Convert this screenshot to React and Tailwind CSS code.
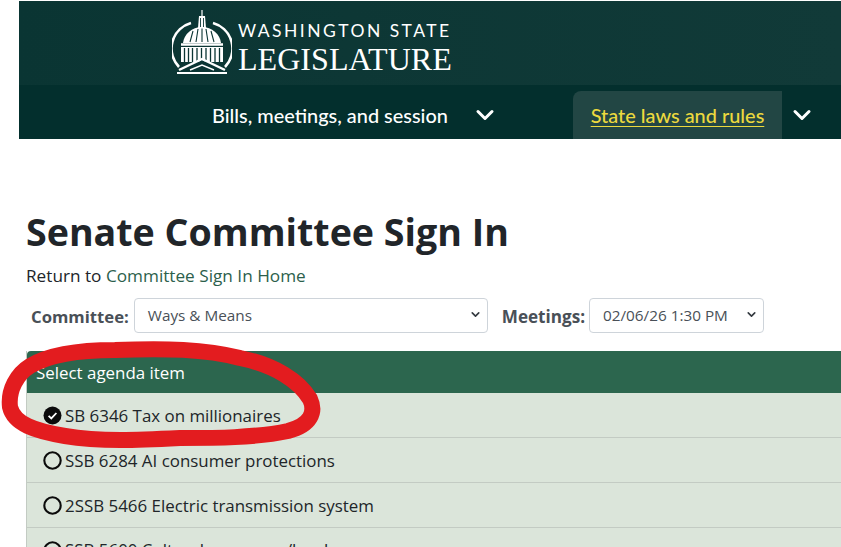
import { ChevronDown } from "lucide-react";

function Logo() {
  return (
    <svg width="60" height="66" viewBox="0 0 60 66" fill="none" className="shrink-0">
      {/* ring */}
      <path d="M19 13 A26.5 26.5 0 0 0 7 57" stroke="#fff" strokeWidth="2.6" />
      <path d="M41 13 A26.5 26.5 0 0 1 53 57" stroke="#fff" strokeWidth="2.6" />
      {/* lantern */}
      <path d="M30 0 L30 6" stroke="#fff" strokeWidth="1.2" />
      <path d="M27 6 L33 6 L34 18 L26 18 Z" fill="#fff" />
      <path d="M28.5 8 V17 M31.5 8 V17" stroke="#0b3534" strokeWidth="0.9" />
      {/* dome */}
      <path d="M11 33 C12 24 20 17 30 17 C40 17 48 24 49 33 Z" fill="#fff" />
      <path d="M18 32 L21 21 M24 32 L26 19 M30 32 V18.5 M36 32 L34 19 M42 32 L39 21" stroke="#0b3534" strokeWidth="1.1" />
      <path d="M9 34.5 H51" stroke="#fff" strokeWidth="2.4" />
      {/* columns */}
      <path d="M9 37 H51 V52 H9 Z" fill="#fff" />
      <path d="M12.5 38 V52 M16.5 38 V52 M20.5 38 V52 M25 38 V52 M29.5 38 V52 M34 38 V52 M38.5 38 V52 M43 38 V52 M47.5 38 V52" stroke="#0b3534" strokeWidth="1.3" />
      {/* pediment */}
      <path d="M6 62 L30 50 L54 62 Z" fill="#0b3534" />
      <path d="M7 60 L30 49 L53 60" stroke="#fff" strokeWidth="2.4" />
      <path d="M18 60 L30 55 L42 60" stroke="#fff" strokeWidth="1.4" />
      <path d="M5 63 H55" stroke="#fff" strokeWidth="2" />
    </svg>
  );
}

function Row({ label, checked }) {
  return (
    <div className="h-[44.9px] flex items-center pl-[16px] pt-[1px] border-b border-[#c3cbc3] bg-[#dbe5da] text-[16.9px] text-[#212529] whitespace-nowrap shrink-0">
      {checked ? (
        <svg width="19" height="19" viewBox="0 0 19 19" className="mr-[3px] shrink-0">
          <circle cx="9.5" cy="9.5" r="9" fill="#0b0b0b" />
          <path d="M5.6 9.8 L8.3 12.4 L13.4 7" stroke="#fff" strokeWidth="1.8" fill="none" />
        </svg>
      ) : (
        <svg width="19" height="19" viewBox="0 0 19 19" className="mr-[3px] shrink-0">
          <circle cx="9.5" cy="9.5" r="8.2" fill="none" stroke="#0b0b0b" strokeWidth="2.1" />
        </svg>
      )}
      {label}
    </div>
  );
}

function Select({ value, width }) {
  return (
    <div
      className={`${width} pl-[13px] pr-[5px] h-[35px] flex items-center justify-between bg-white border border-[#ced4da] rounded-[4px] text-[15.3px] text-[#495057] shrink-0`}
    >
      <span>{value}</span>
      <ChevronDown size={13} strokeWidth={3} className="text-[#343a40] mb-[2px]" />
    </div>
  );
}

export default function App() {
  return (
    <div className="relative w-[841px] h-[547px] overflow-hidden bg-white font-['Open_Sans',sans-serif]">
      {/* Site header */}
      <header className="ml-[19px] pt-[1px] text-white">
        <div className="h-[84px] flex items-start pl-[153px] pt-[9px] bg-gradient-to-r from-[#0a3533] to-[#113a38]">
          <Logo />
          <div className="ml-[6px] pt-[10px]">
            <div className="text-[17.5px] leading-[22px] tracking-[2.45px] font-['Lato',sans-serif] whitespace-nowrap">
              WASHINGTON STATE
            </div>
            <div className="text-[32.1px] leading-[34px] font-['Liberation_Serif',serif] whitespace-nowrap">
              LEGISLATURE
            </div>
          </div>
        </div>
        <nav className="h-[54px] flex items-end bg-[#032f2d] font-['Lato',sans-serif] text-[19.9px] font-medium">
          <div className="h-[48px] flex items-center pl-[193px] w-[554px] shrink-0">
            <span className="mt-[1px]">Bills, meetings, and session</span>
            <ChevronDown size={28} strokeWidth={2.6} className="ml-[23px]" />
          </div>
          <div className="h-[48px] w-[209px] pt-[1px] flex items-center justify-center rounded-tl-[8px] bg-[#224644] text-[#ecd93e] underline underline-offset-[3px] shrink-0">
            State laws and rules
          </div>
          <div className="h-[48px] flex items-center ml-[6px]">
            <ChevronDown size={28} strokeWidth={2.6} />
          </div>
        </nav>
      </header>

      {/* Page content */}
      <main className="pl-[26px] pt-[66px]">
        <h1 className="text-[37.6px] leading-[54px] font-bold text-[#212529] whitespace-nowrap">Senate Committee Sign In</h1>
        <p className="mt-[5px] text-[17.2px] leading-[24px] text-[#212529]">
          Return to <span className="text-[#2c5f4c]">Committee Sign In Home</span>
        </p>
        <div className="mt-[10px] flex items-center pl-[5px] h-[35px] whitespace-nowrap">
          <label className="text-[16.7px] font-bold text-[#495057] mt-[3px] mr-[5px]">Committee:</label>
          <Select value="Ways & Means" width="w-[354px]" />
          <label className="text-[17.1px] font-bold text-[#495057] mt-[3px] ml-[14px] mr-[4px]">Meetings:</label>
          <Select value="02/06/26 1:30 PM" width="w-[175px]" />
        </div>
        <section className="mt-[18px] w-[900px] flex flex-col border-l border-[#c3cbc3]">
          <div className="h-[42px] flex items-center pl-[9px] pt-[1px] bg-[#2c664e] text-white text-[16.9px] rounded-tl-[4px] shrink-0">
            Select agenda item
          </div>
          <Row label="SB 6346 Tax on millionaires" checked />
          <Row label="SSB 6284 AI consumer protections" />
          <Row label="2SSB 5466 Electric transmission system" />
          <Row label="SSB 5600 Cultural resources/local gov" />
        </section>
      </main>

      {/* Hand drawn annotation */}
      <svg className="absolute left-0 top-0 pointer-events-none" width="841" height="547" viewBox="0 0 841 547" fill="none">
        <path
          d="M30 366 C50 354 80 350 115 350 C165 348 205 349 240 358 C275 365 299 381 310 399 C316 412 311 425 288 431 C255 438 215 438 180 438 C140 440 100 442 65 436 C35 431 14 424 10 407 C8 390 17 374 30 366 Z"
          stroke="#e31c1f"
          strokeWidth="16"
          strokeLinejoin="round"
        />
      </svg>
    </div>
  );
}
